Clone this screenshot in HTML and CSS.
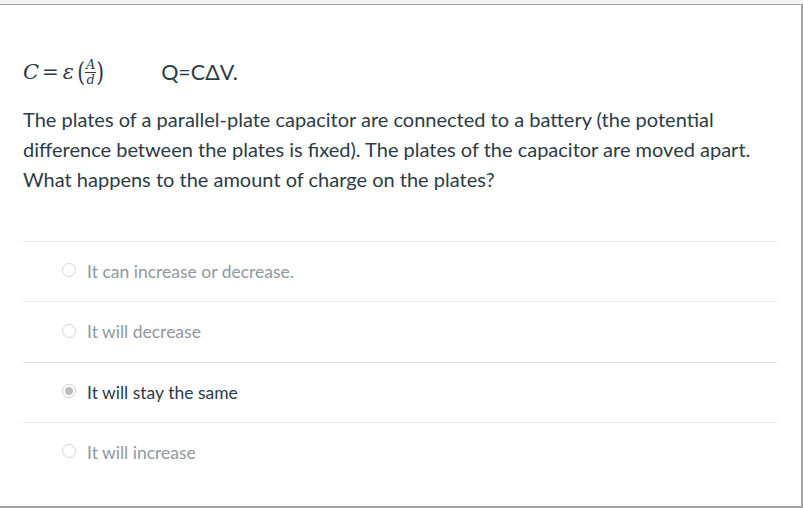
FILE: index.html
```html
<!DOCTYPE html>
<html>
<head>
<meta charset="utf-8">
<link rel="stylesheet" href="styles.css">
</head>
<body>
<div class="strip"></div>
<div class="frame">
  <div class="content">
    <div class="formula">
      <span class="math"><i class="var">C</i><span class="op">=</span><i class="eps">ε</i><span class="paren">(</span><span class="frac"><i class="num">A</i><i class="den">d</i></span><span class="paren">)</span></span>
      <span class="eq">Q=CΔV.</span>
    </div>
    <p class="question">The plates of a parallel-plate capacitor are connected to a battery (the potential difference between the plates is fixed). The plates of the capacitor are moved apart. What happens to the amount of charge on the plates?</p>
    <div class="options">
      <div class="option"><span class="radio"></span><span class="label">It can increase or decrease.</span></div>
      <div class="option"><span class="radio"></span><span class="label">It will decrease</span></div>
      <div class="option selected dark"><span class="radio"></span><span class="label">It will stay the same</span></div>
      <div class="option"><span class="radio"></span><span class="label">It will increase</span></div>
    </div>
  </div>
</div>
</body>
</html>
```
FILE: styles.css
```css
html, body { margin: 0; padding: 0; background: #fff; }
body { width: 803px; height: 508px; overflow: hidden; font-family: Lato, "Noto Sans", sans-serif; color: #2d3b45; }
.strip { height: 4px; background: #f3f3f3; }
.frame {
  box-sizing: border-box;
  width: 803px;
  height: 504px;
  border-top: 1px solid #a3a3a3;
  border-right: 2px solid #a3a3a3;
  border-bottom: 2px solid #a3a3a3;
  background: #fff;
}
.content { padding: 0 24px 0 23px; }
.formula { display: flex; align-items: center; height: 34px; margin-top: 50px; }
.math { display: inline-flex; align-items: center; font-family: "DejaVu Serif", serif; font-size: 21px; color: #2d3b45; }
.math i { font-style: italic; font-family: "DejaVu Serif", serif; }
.op { margin: 0 4px 0 3px; font-size: 20px; }
.eps { margin-right: 3px; }
.paren { font-size: 20px; transform: scaleY(1.3); display: inline-block; line-height: 24px; }
.frac { display: inline-flex; flex-direction: column; align-items: center; margin: 0; font-size: 13px; line-height: 14px; }
.frac .num { border-bottom: 1px solid #2d3b45; padding: 0 1px; }
.eq { margin-left: 57px; font-size: 21.5px; color: #2d3b45; }
.question { margin: 15px 0 0; font-size: 20px; line-height: 30px; width: 740px; }
.options { margin-top: 47px; width: 754px; }
.option { display: flex; align-items: center; height: 60px; border-top: 1px solid #ebebeb; padding-left: 39px; box-sizing: border-box; font-size: 17.5px; color: #8f989f; }
.option.dark { color: #2d3b45; }
.option:nth-child(2) { height: 61px; }
.option:nth-child(3) { border-top-color: #dcdcdc; }
.radio { width: 14px; height: 14px; box-sizing: border-box; border: 1px solid #d6d6d6; border-radius: 50%; margin-right: 11px; background: #fff; flex: none; display: flex; align-items: center; justify-content: center; margin-top: -3px; }
.selected .radio { border-color: #cfcfcf; }
.selected .radio::after { content: ""; width: 8px; height: 8px; border-radius: 50%; background: #bdbdbd; }
.label { line-height: 20px; }
```
